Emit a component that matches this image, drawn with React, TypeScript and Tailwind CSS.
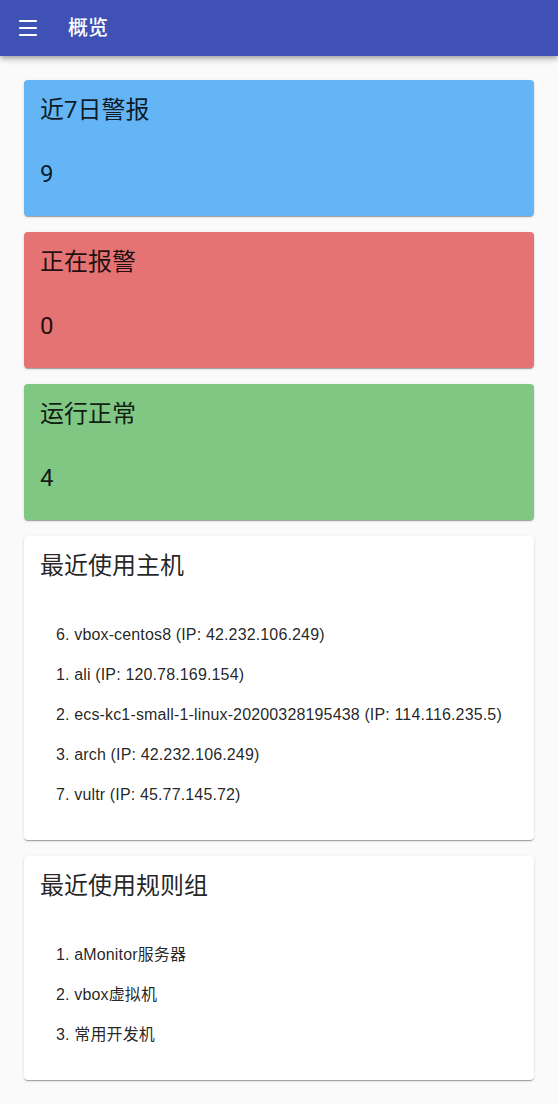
import { Menu } from "lucide-react";

const stats = [
  { title: "近7日警报", value: 9, bg: "bg-[#64b5f6]" },
  { title: "正在报警", value: 0, bg: "bg-[#e57373]" },
  { title: "运行正常", value: 4, bg: "bg-[#81c784]" },
];

const hosts = [
  "6. vbox-centos8 (IP: 42.232.106.249)",
  "1. ali (IP: 120.78.169.154)",
  "2. ecs-kc1-small-1-linux-20200328195438 (IP: 114.116.235.5)",
  "3. arch (IP: 42.232.106.249)",
  "7. vultr (IP: 45.77.145.72)",
];

const groups = ["1. aMonitor服务器", "2. vbox虚拟机", "3. 常用开发机"];

const card = "rounded-[4px] shadow-[0_2px_1px_-1px_rgba(0,0,0,0.2),0_1px_1px_0_rgba(0,0,0,0.14),0_1px_3px_0_rgba(0,0,0,0.12)]";

function ListCard({ title, items }: { title: string; items: string[] }) {
  return (
    <div className={`bg-white ${card} px-4 pt-4 pb-[33px]`}>
      <h5 className="text-[24px] leading-[26px] pt-[1px]">{title}</h5>
      <ul className="pt-[44px] pl-4 flex flex-col gap-4">
        {items.map((it) => (
          <li
            key={it}
            className="text-[16px] leading-[24px] tracking-[0.00938em]"
            style={{ fontFamily: '"Liberation Sans", "Noto Sans CJK SC", sans-serif' }}
          >
            {it}
          </li>
        ))}
      </ul>
    </div>
  );
}

export default function App() {
  return (
    <div
      className="min-h-screen bg-[#fafafa] text-[rgba(0,0,0,0.87)]"
      style={{ fontFamily: 'Roboto, "Noto Sans CJK SC", sans-serif' }}
    >
      <header className="h-14 bg-[#3f51b5] text-white flex items-center px-4 shadow-[0_2px_4px_-1px_rgba(0,0,0,0.2),0_4px_5px_0_rgba(0,0,0,0.14),0_1px_10px_0_rgba(0,0,0,0.12)]">
        <Menu size={24} strokeWidth={2.2} />
        <h1 className="ml-7 text-[20px] font-medium">概览</h1>
      </header>

      <div className="p-6 flex flex-col gap-4">
        {stats.map((s) => (
          <div key={s.title} className={`${s.bg} ${card} px-4 pt-4 pb-6 h-[136px]`}>
            <h5 className="text-[24px] leading-[26px] pt-[1px]">{s.title}</h5>
            <p className="mt-[38px] text-[24px] leading-[26px]">{s.value}</p>
          </div>
        ))}
        <ListCard title="最近使用主机" items={hosts} />
        <ListCard title="最近使用规则组" items={groups} />
      </div>
    </div>
  );
}
